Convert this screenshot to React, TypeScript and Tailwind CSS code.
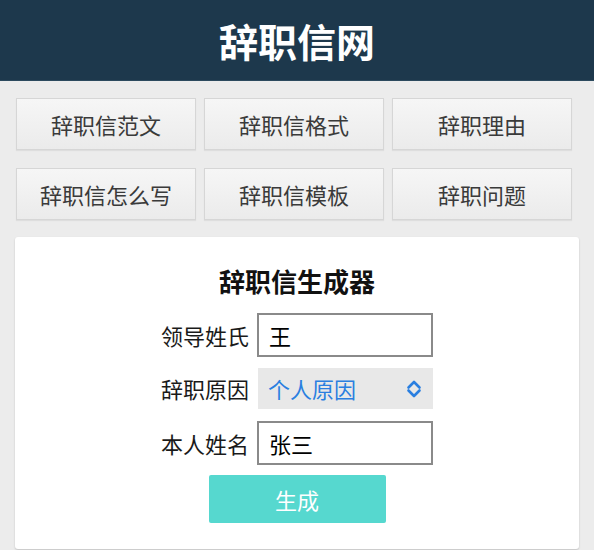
const font = { fontFamily: '"Noto Sans CJK SC", "Noto Sans", sans-serif' };

const links = [
  "辞职信范文",
  "辞职信格式",
  "辞职理由",
  "辞职信怎么写",
  "辞职信模板",
  "辞职问题",
];

export default function App() {
  return (
    <div className="min-h-[550px] bg-[#ececec]" style={font}>
      <header className="h-[81px] bg-[#1d384c] border-b border-[#2c4a5e] flex items-center justify-center">
        <h1 className="text-[39px] font-bold text-white leading-none">辞职信网</h1>
      </header>

      <nav className="grid grid-cols-[180px_180px_180px] gap-x-2 gap-y-[18px] pl-4 pt-[17px]">
        {links.map((t) => (
          <a
            key={t}
            className="h-[52px] flex items-center justify-center border border-[#d6d6d6] bg-gradient-to-b from-[#f6f6f6] to-[#ebebeb] shadow-[0_1px_1px_rgba(0,0,0,0.06)] text-[22px] text-[#3a3a3a]"
          >
            {t}
          </a>
        ))}
      </nav>

      <section className="mx-[15px] mt-[17px] h-[312px] bg-white rounded-[3px] shadow-[0_1px_2px_rgba(0,0,0,0.18)] flex flex-col items-center pt-[31px]">
        <h2 className="text-[26px] font-bold text-[#111] leading-none">辞职信生成器</h2>

        <div className="mt-[19px] flex flex-col">
          <div className="flex items-center gap-2">
            <label className="text-[22px] text-[#1a1a1a] w-[88px] whitespace-nowrap">领导姓氏</label>
            <div className="w-[176px] h-[44px] border-2 border-[#8a8a8a] flex items-center pl-[10px] text-[22px] text-black">
              王
            </div>
          </div>
          <div className="flex items-center gap-2 mt-[11px]">
            <label className="text-[22px] text-[#1a1a1a] w-[88px] whitespace-nowrap">辞职原因</label>
            <div className="w-[175px] h-[41px] ml-px bg-[#e8e8e8] flex items-center justify-between pl-[10px] pr-[11px] text-[22px] text-[#2a7fe0]">
              <span>个人原因</span>
              <svg width="16" height="20" viewBox="0 0 16 20" fill="none" stroke="#2a7fe0" strokeWidth="2.6" strokeLinecap="round" strokeLinejoin="round">
                <path d="M2.5 8.5 8 3l5.5 5.5" />
                <path d="M2.5 11.5 8 17l5.5-5.5" />
              </svg>
            </div>
          </div>
          <div className="flex items-center gap-2 mt-[12px]">
            <label className="text-[22px] text-[#1a1a1a] w-[88px] whitespace-nowrap">本人姓名</label>
            <div className="w-[176px] h-[44px] border-2 border-[#8a8a8a] flex items-center pl-[10px] text-[22px] text-black">
              张三
            </div>
          </div>
        </div>

        <button className="mt-[10px] w-[177px] h-[48px] rounded-[2px] bg-[#56d8cf] text-white text-[22px]">
          生成
        </button>
      </section>
    </div>
  );
}
